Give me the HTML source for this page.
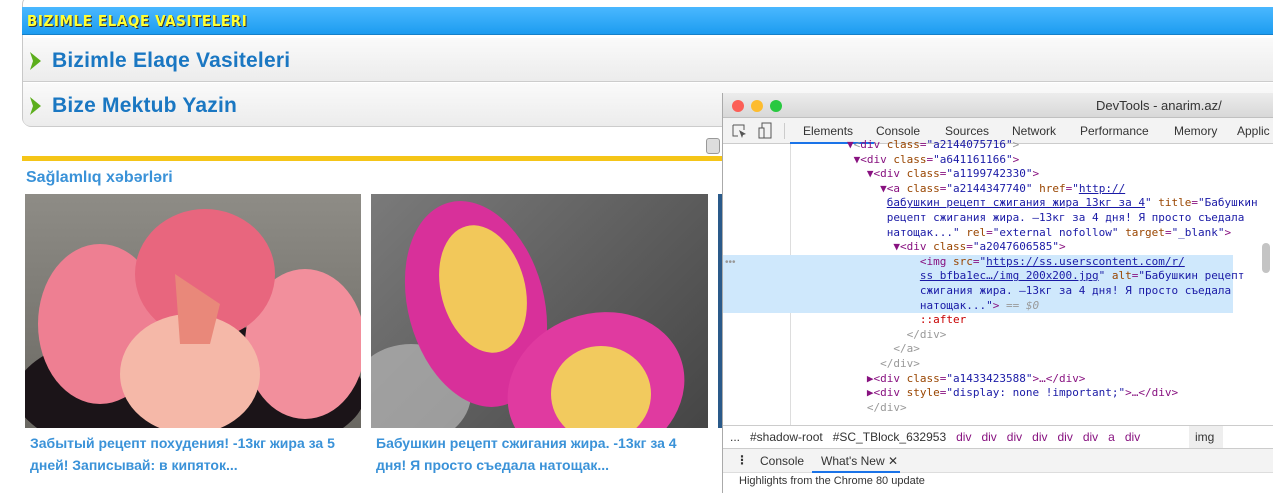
<!DOCTYPE html>
<html><head><meta charset="utf-8"><style>
*{margin:0;padding:0;box-sizing:border-box}
body{width:1273px;height:485px;overflow:hidden;background:#fff;position:relative;font-family:"Liberation Sans",sans-serif}
.abs{position:absolute}
.box{left:22px;top:-4px;width:1300px;height:130px;border:1px solid #c8c8c8;border-radius:8px;background:#fff}
.hdr{left:22px;top:7px;width:1260px;height:28px;background:linear-gradient(#4ab8ff,#1d9cf0);border-bottom:1px solid #1680c8}
.hdr span{position:absolute;left:5px;top:5px;font-weight:bold;font-size:15px;color:#ffff33;text-shadow:1px 1px 0 #333;letter-spacing:0.6px;font-family:"DejaVu Sans Condensed","DejaVu Sans",sans-serif}
.row{left:23px;width:1260px;height:44px;background:linear-gradient(#fafafa,#ececec);border-bottom:1px solid #ccc}
.row b{position:absolute;left:29px;top:11px;font-size:21px;color:#1a77c2;letter-spacing:0.2px}
.row i{position:absolute;left:5px;top:13px;width:14px;height:20px}
.dt{left:722px;top:93px;width:560px;height:400px;background:#fff;border-left:1px solid #aaa;font-family:"Liberation Sans","DejaVu Sans",sans-serif}
.mono{font-family:"DejaVu Sans Mono","Liberation Mono",monospace;font-size:11px;line-height:14.6px;white-space:pre;color:#881280}
.at{color:#994500}.av{color:#1a1aa6}.u{color:#1a1aa6;text-decoration:underline}.g{color:#999}
.cap{font-size:14px;font-weight:bold;color:#3a92d8;line-height:22px}
</style></head><body>
<div class="abs box"></div>
<div class="abs hdr"><span>BIZIMLE ELAQE VASITELERI</span></div>
<div class="abs row" style="top:38px"><i><svg width="14" height="20"><path d="M2 1 L13 10 L2 19 L5 10Z" fill="#5cae1c"/></svg></i><b>Bizimle Elaqe Vasiteleri</b></div>
<div class="abs row" style="top:83px;border-radius:0 0 8px 8px"><i><svg width="14" height="20"><path d="M2 1 L13 10 L2 19 L5 10Z" fill="#5cae1c"/></svg></i><b>Bize Mektub Yazin</b></div>
<div class="abs" style="left:22px;top:156px;width:720px;height:5px;background:#f5c518"></div>
<div class="abs" style="left:706px;top:138px;width:14px;height:16px;border:1px solid #999;border-radius:3px;background:#ddd"></div>
<div class="abs" style="left:26px;top:169px;font-size:16px;font-weight:bold;color:#3a92d8">Sağlamlıq xəbərləri</div>
<div class="abs" style="left:25px;top:194px;width:336px;height:234px;overflow:hidden;background:linear-gradient(#8e8c86,#6a6862)">
 <svg width="336" height="234">
  <ellipse cx="165" cy="200" rx="175" ry="70" fill="#1b1418"/>
  <ellipse cx="75" cy="130" rx="62" ry="80" fill="#ee7f92"/>
  <ellipse cx="280" cy="150" rx="60" ry="75" fill="#f28f9c"/>
  <ellipse cx="180" cy="80" rx="70" ry="65" fill="#e8667e"/>
  <ellipse cx="165" cy="180" rx="70" ry="60" fill="#f5b8a8"/>
  <path d="M150 80 L195 110 L185 150 L155 150Z" fill="#e9887a"/>
 </svg></div>
<div class="abs" style="left:371px;top:194px;width:337px;height:234px;overflow:hidden;background:linear-gradient(135deg,#7a7a7a,#454545)">
 <svg width="337" height="234">
  <ellipse cx="40" cy="200" rx="60" ry="50" fill="#b8b8b8" opacity=".7"/>
  <ellipse cx="105" cy="110" rx="68" ry="105" transform="rotate(-15 105 110)" fill="#d8309a"/>
  <ellipse cx="112" cy="95" rx="42" ry="65" transform="rotate(-15 112 95)" fill="#f2c85a"/>
  <ellipse cx="225" cy="195" rx="90" ry="75" transform="rotate(-20 225 195)" fill="#e03aa0"/>
  <ellipse cx="230" cy="200" rx="50" ry="48" fill="#f2ca5e"/>
 </svg></div>
<div class="abs" style="left:718px;top:194px;width:6px;height:234px;background:#2a5a8a"></div>
<div class="abs cap" style="left:30px;top:432px;width:330px">Забытый рецепт похудения! -13кг жира за 5 дней! Записывай: в кипяток...</div>
<div class="abs cap" style="left:376px;top:432px;width:330px">Бабушкин рецепт сжигания жира. -13кг за 4 дня! Я просто съедала натощак...</div>

<div class="abs dt">
 <div class="abs" style="left:0;top:0;width:560px;height:25px;background:linear-gradient(#ececec,#d8d8d8);border-bottom:1px solid #c0c0c0">
  <span class="abs" style="left:9px;top:7px;width:12px;height:12px;border-radius:50%;background:#fc5f57"></span>
  <span class="abs" style="left:28px;top:7px;width:12px;height:12px;border-radius:50%;background:#fdbc2e"></span>
  <span class="abs" style="left:47px;top:7px;width:12px;height:12px;border-radius:50%;background:#28c840"></span>
  <span class="abs" style="left:373px;top:5px;font-size:13px;color:#333">DevTools - anarim.az/</span>
 </div>
 <div class="abs" style="left:0;top:25px;width:560px;height:26px;background:#f3f3f3;border-bottom:1px solid #ccc;font-size:12px;color:#333">
  <svg class="abs" style="left:9px;top:6px" width="16" height="14"><path d="M1 1h11v5M1 1v11h5" fill="none" stroke="#555"/><path d="M7 6l7 4-3 1-1 3z" fill="#555"/></svg>
  <svg class="abs" style="left:35px;top:4px" width="14" height="17"><rect x="4" y="1" width="9" height="15" fill="none" stroke="#555"/><rect x="1" y="6" width="5" height="10" fill="#f3f3f3" stroke="#555"/></svg>
  <span class="abs" style="left:61px;top:5px;width:1px;height:16px;background:#ccc"></span>
  <span class="abs" style="left:80px;top:6px">Elements</span>
  <span class="abs" style="left:67px;top:24px;width:84px;height:2px;background:#1a73e8"></span>
  <span class="abs" style="left:153px;top:6px">Console</span>
  <span class="abs" style="left:222px;top:6px">Sources</span>
  <span class="abs" style="left:289px;top:6px">Network</span>
  <span class="abs" style="left:357px;top:6px">Performance</span>
  <span class="abs" style="left:451px;top:6px">Memory</span>
  <span class="abs" style="left:514px;top:6px">Applic</span>
 </div>
 <div class="abs" style="left:0;top:51px;width:68px;height:282px;background:#fff;border-right:1px solid #ddd"></div>
 <div class="abs" style="left:0;top:162px;width:510px;height:58px;background:#cfe8fc"></div>
 <span class="abs g" style="left:2px;top:164px;font-size:10px">•••</span>
 <div class="abs mono" style="left:124px;top:45px">▼<span class="g">&lt;</span>div <span class="at">class</span>=<span class="av">"a2144075716"</span><span class="g">&gt;</span>
 ▼&lt;div <span class="at">class</span>=<span class="av">"a641161166"</span>&gt;
   ▼&lt;div <span class="at">class</span>=<span class="av">"a1199742330"</span>&gt;
     ▼&lt;a <span class="at">class</span>=<span class="av">"a2144347740"</span> <span class="at">href</span>=<span class="av">"<span class="u">http://</span></span>
      <span class="u">бабушкин рецепт сжигания жира 13кг за 4</span><span class="av">"</span> <span class="at">title</span>=<span class="av">"Бабушкин</span>
<span class="av">      рецепт сжигания жира. –13кг за 4 дня! Я просто съедала</span>
<span class="av">      натощак..."</span> <span class="at">rel</span>=<span class="av">"external nofollow"</span> <span class="at">target</span>=<span class="av">"_blank"</span>&gt;
       ▼&lt;div <span class="at">class</span>=<span class="av">"a2047606585"</span>&gt;
           &lt;img <span class="at">src</span>=<span class="av">"<span class="u">https://ss.userscontent.com/r/</span></span>
           <span class="u">ss bfba1ec…/img 200x200.jpg</span><span class="av">"</span> <span class="at">alt</span>=<span class="av">"Бабушкин рецепт</span>
<span class="av">           сжигания жира. –13кг за 4 дня! Я просто съедала</span>
<span class="av">           натощак..."</span>&gt; <span class="g">== <i>$0</i></span>
           <span style="color:#c80000">::after</span>
         <span class="g">&lt;/div&gt;</span>
       <span class="g">&lt;/a&gt;</span>
     <span class="g">&lt;/div&gt;</span>
   ▶&lt;div <span class="at">class</span>=<span class="av">"a1433423588"</span>&gt;…&lt;/div&gt;
   ▶&lt;div <span class="at">style</span>=<span class="av">"display: none !important;"</span>&gt;…&lt;/div&gt;
   <span class="g">&lt;/div&gt;</span></div>
 <div class="abs" style="left:539px;top:150px;width:8px;height:30px;border-radius:4px;background:#c4c4c4"></div>
 <div class="abs" style="left:0;top:332px;width:560px;height:23px;background:#fff;border-top:1px solid #ccc;font-size:12px;color:#333;word-spacing:0">
  <span class="abs" style="left:7px;top:4px">...&nbsp;&nbsp; #shadow-root&nbsp;&nbsp; #SC_TBlock_632953&nbsp;&nbsp; <span style="color:#881280">div&nbsp;&nbsp; div&nbsp;&nbsp; div&nbsp;&nbsp; div&nbsp;&nbsp; div&nbsp;&nbsp; div&nbsp;&nbsp; a&nbsp;&nbsp; div</span></span>
  <span class="abs" style="left:466px;top:0;width:34px;height:22px;background:#eee;padding:4px 0 0 6px">img</span>
 </div>
 <div class="abs" style="left:0;top:355px;width:560px;height:25px;background:#f3f3f3;border-top:1px solid #ccc;border-bottom:1px solid #ddd;font-size:12px;color:#333">
  <span class="abs" style="left:13px;top:4px;font-weight:bold">⋮</span>
  <span class="abs" style="left:37px;top:5px">Console</span>
  <span class="abs" style="left:98px;top:5px">What's New ✕</span>
  <span class="abs" style="left:89px;top:22px;width:88px;height:2px;background:#1a73e8"></span>
 </div>
 <span class="abs" style="left:16px;top:382px;font-size:11px;color:#333">Highlights from the Chrome 80 update</span>
</div>
</body></html>
